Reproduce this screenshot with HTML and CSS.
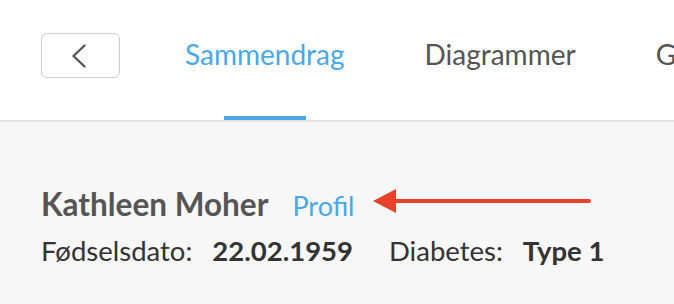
FILE: index.html
```html
<!DOCTYPE html>
<html>
<head>
    <meta charset="utf-8">
    <title>Sammendrag</title>
    <link rel="stylesheet" href="styles.css">
</head>
<body>
<div class="topbar">
    <div class="backbtn">
        <svg width="16" height="24" viewBox="0 0 16 24">
            <path d="M13.5 1.5 L2.5 12 L13.5 22.5" fill="none" stroke="#555" stroke-width="2.4" stroke-linecap="round" stroke-linejoin="round"/>
        </svg>
    </div>
    <div class="tabs">
        <div class="tab active">Sammendrag</div>
        <div class="tab">Diagrammer</div>
        <div class="tab">Glukose</div>
    </div>
</div>

<div class="patient">
    <div class="namerow">
        <span class="name">Kathleen Moher</span>
        <span class="profil">Profil</span>
        <svg class="arrow" width="218" height="26" viewBox="0 0 218 26">
            <path d="M0 13 L23 1 L23 25 Z" fill="#e8432a"/>
            <line x1="20" y1="13" x2="216" y2="13" stroke="#e8432a" stroke-width="4" stroke-linecap="round"/>
        </svg>
    </div>
    <div class="inforow">
        <span class="label">Fødselsdato:</span>
        <span class="value">22.02.1959</span>
        <span class="label second">Diabetes:</span>
        <span class="value">Type 1</span>
    </div>
</div>
</body>
</html>
```

FILE: styles.css
```css
html
{
    background: #f7f7f7;
}

body
{
    margin: 0;
    font-family: Lato, "Open Sans", sans-serif;
    color: #555;
    overflow: hidden;
}

.topbar
{
    background: #fff;
    height: 120px;
    border-bottom: 2px solid #e4e4e4;
    display: flex;
    align-items: stretch;
    padding-left: 41px;
    white-space: nowrap;
    overflow: hidden;
}

.backbtn
{
    flex-shrink: 0;
    box-sizing: border-box;
    margin-top: 33px;
    width: 79px;
    height: 45px;
    border: 1.5px solid #ccc;
    border-radius: 6px;
    display: flex;
    align-items: center;
    justify-content: center;
    padding-right: 3px;
}

.tabs
{
    display: flex;
    margin-left: 65px;
}

.tab
{
    flex-shrink: 0;
    display: flex;
    flex-direction: column;
    align-items: center;
    font-size: 28px;
    padding-top: 37px;
    margin-right: 80px;
    color: #555;
}

.tab.active
{
    color: #4aa8e8;
}

.tab.active::after
{
    content: "";
    margin-top: auto;
    margin-bottom: -2px;
    width: 82px;
    height: 6px;
    background: #4aa8e8;
}

.patient
{
    padding: 63px 0 0 41px;
}

.namerow
{
    display: flex;
    align-items: baseline;
}

.name
{
    font-size: 31.5px;
    line-height: 38px;
    font-weight: bold;
    color: #555;
}

.profil
{
    font-size: 27px;
    color: #4aa8e8;
    margin-left: 24px;
}

.arrow
{
    align-self: center;
    margin-left: 19px;
    margin-bottom: 6px;
}

.inforow
{
    display: flex;
    margin-top: 11px;
    font-size: 27.5px;
    color: #333;
}

.value
{
    font-weight: bold;
    margin-left: 20px;
}

.second
{
    margin-left: 36px;
}
```
